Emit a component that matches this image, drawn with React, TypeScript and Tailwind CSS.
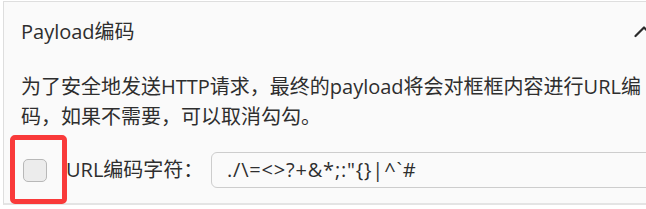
const font = { fontFamily: '"Open Sans", "Noto Sans CJK SC", sans-serif' };

function ChevronUp() {
  return (
    <svg width="20" height="12" viewBox="0 0 20 12" fill="none" className="mr-[9px] shrink-0">
      <polyline
        points="1.5,10 10,1.5 18.5,10"
        stroke="#2a2a2a"
        strokeWidth="2.2"
        strokeLinecap="round"
        strokeLinejoin="round"
      />
    </svg>
  );
}

export default function App() {
  return (
    <div className="relative h-[209px] w-[646px] overflow-hidden bg-white" style={font}>
      <div className="ml-[3px] mt-[1px] w-[660px] border-b-2 border-l border-t border-b-[#e4e4e4] border-l-[#dedede] border-t-[#dedede] bg-[#fafafa]">
        <div className="flex items-center pl-[17px] pt-[15px]">
          <h2 className="flex-1 text-[20px] leading-[30px] text-[#2e2e2e]">Payload编码</h2>
          <ChevronUp />
        </div>
        <p className="mt-[25px] w-[652px] pl-[17px] text-[20px] leading-[30px] text-[#2e2e2e]">
          为了安全地发送HTTP请求，最终的payload将会对框框内容进行URL编码，如果不需要，可以取消勾勾。
        </p>
        <div className="mt-[20px] flex h-[36px] items-center">
          <span className="ml-[19px] h-[23px] w-[24px] shrink-0 rounded-[5px] border-[1.5px] border-[#b8b8b8] bg-[#ececec]" />
          <label className="ml-[19px] w-[145px] shrink-0 text-[20px] leading-[30px] text-[#2e2e2e]">URL编码字符：</label>
          <div className="flex h-[36px] flex-1 items-center rounded-[6px] border-[1.5px] border-[#cdcdcd] bg-[#fafafa] pl-[15px] text-[20px] tracking-[0.8px] text-[#2e2e2e]">
            {'./\\=<>?+&*;:"{}|^`#'}
          </div>
        </div>
        <div className="h-[15px]" />
      </div>
      <div className="pointer-events-none absolute left-[10px] top-[135px] h-[69px] w-[57px] rounded-[5px] border-[5px] border-[#f93a3a]" />
    </div>
  );
}
